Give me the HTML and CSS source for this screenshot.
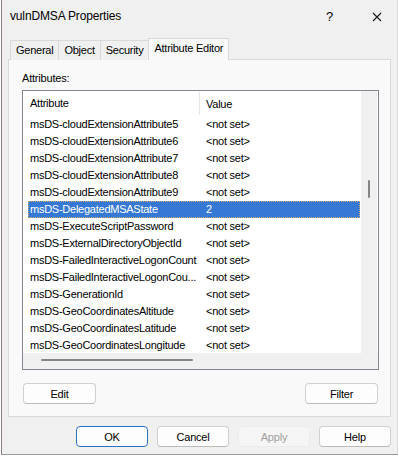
FILE: index.html
```html
<!DOCTYPE html>
<html>
<head>
<meta charset="utf-8">
<link rel="stylesheet" href="styles.css">
</head>
<body>
<div class="window">
  <div class="titlebar">
    <span class="title">vulnDMSA Properties</span>
    <span class="help">?</span>
    <svg class="close" width="10" height="10" viewBox="0 0 10 10"><path d="M1 1 L9 9 M9 1 L1 9" stroke="#1a1a1a" stroke-width="1.1" fill="none"/></svg>
  </div>
  <div class="tabs">
    <div class="tab">General</div>
    <div class="tab">Object</div>
    <div class="tab">Security</div>
    <div class="tab active">Attribute Editor</div>
  </div>
  <div class="panel">
    <div class="label">Attributes:</div>
    <div class="list">
      <div class="list-main">
        <div class="list-content">
          <div class="header">
            <div class="c1">Attribute</div>
            <div class="c2">Value</div>
          </div>
          <div class="row"><div class="c1">msDS-cloudExtensionAttribute5</div><div class="c2">&lt;not set&gt;</div></div>
          <div class="row"><div class="c1">msDS-cloudExtensionAttribute6</div><div class="c2">&lt;not set&gt;</div></div>
          <div class="row"><div class="c1">msDS-cloudExtensionAttribute7</div><div class="c2">&lt;not set&gt;</div></div>
          <div class="row"><div class="c1">msDS-cloudExtensionAttribute8</div><div class="c2">&lt;not set&gt;</div></div>
          <div class="row"><div class="c1">msDS-cloudExtensionAttribute9</div><div class="c2">&lt;not set&gt;</div></div>
          <div class="row selected"><div class="c1">msDS-DelegatedMSAState</div><div class="c2">2</div></div>
          <div class="row"><div class="c1">msDS-ExecuteScriptPassword</div><div class="c2">&lt;not set&gt;</div></div>
          <div class="row"><div class="c1">msDS-ExternalDirectoryObjectId</div><div class="c2">&lt;not set&gt;</div></div>
          <div class="row"><div class="c1">msDS-FailedInteractiveLogonCount</div><div class="c2">&lt;not set&gt;</div></div>
          <div class="row"><div class="c1">msDS-FailedInteractiveLogonCou...</div><div class="c2">&lt;not set&gt;</div></div>
          <div class="row"><div class="c1">msDS-GenerationId</div><div class="c2">&lt;not set&gt;</div></div>
          <div class="row"><div class="c1">msDS-GeoCoordinatesAltitude</div><div class="c2">&lt;not set&gt;</div></div>
          <div class="row"><div class="c1">msDS-GeoCoordinatesLatitude</div><div class="c2">&lt;not set&gt;</div></div>
          <div class="row"><div class="c1">msDS-GeoCoordinatesLongitude</div><div class="c2">&lt;not set&gt;</div></div>
        </div>
        <div class="vscroll"><div class="vthumb"></div></div>
      </div>
      <div class="hscroll"><div class="hthumb"></div></div>
    </div>
    <div class="panel-buttons">
      <button class="btn">Edit</button>
      <button class="btn">Filter</button>
    </div>
  </div>
  <div class="dialog-buttons">
    <button class="btn default">OK</button>
    <button class="btn">Cancel</button>
    <button class="btn disabled">Apply</button>
    <button class="btn">Help</button>
  </div>
</div>
</body>
</html>
```

FILE: styles.css
```css
html, body {
  margin: 0;
  padding: 0;
}
body {
  width: 399px;
  height: 458px;
  overflow: hidden;
  background: #ffffff;
  font-family: "Liberation Sans", Arial, sans-serif;
  color: #000;
}
.window {
  box-sizing: border-box;
  width: 397px;
  height: 455px;
  margin-left: 1px;
  background: #f0f0f0;
  border-left: 1px solid #8c7f86;
  border-bottom: 1px solid #9a9a9a;
  border-right: 1px solid #dcdcdc;
}
.titlebar {
  height: 32px;
  display: flex;
  align-items: center;
  padding-left: 8px;
  font-size: 12px;
}
.title {
  flex: 1;
  letter-spacing: -0.15px;
}
.help {
  font-size: 13px;
  width: 8px;
  margin-right: 38px;
  margin-top: 1px;
}
.close {
  margin-right: 15px;
  margin-top: 1px;
}
.tabs {
  display: flex;
  align-items: flex-end;
  height: 22px;
  margin-top: 6px;
  padding-left: 8px;
  margin-bottom: -1px;
  position: relative;
  z-index: 1;
}
.tab {
  box-sizing: border-box;
  height: 20px;
  border: 1px solid #d9d9d9;
  border-bottom: none;
  margin-left: -1px;
  padding: 0 5px 0 5px;
  font-size: 11px;
  letter-spacing: -0.25px;
  line-height: 19px;
  background: #f0f0f0;
}
.tab:first-child {
  margin-left: 0;
}
.tab.active {
  height: 22px;
  background: #f9f9f9;
  line-height: 19px;
  padding: 0 5px 0 5px;
}
.panel {
  box-sizing: border-box;
  margin-left: 6px;
  width: 383px;
  height: 358px;
  border: 1px solid #d9d9d9;
  background: #f9f9f9;
  padding: 11px 10px 0 13px;
}
.label {
  font-size: 11px;
  line-height: 14px;
  letter-spacing: -0.2px;
}
.list {
  box-sizing: border-box;
  margin-top: 5px;
  width: 357px;
  height: 280px;
  border: 1px solid #828790;
  background: #fff;
  display: flex;
  flex-direction: column;
}
.list-main {
  flex: 1;
  display: flex;
  min-height: 0;
}
.list-content {
  flex: 1;
  overflow: hidden;
  background: #fff;
  font-size: 11px;
  letter-spacing: -0.25px;
}
.vscroll {
  width: 16px;
  margin-right: 1px;
  background: #f0f0f0;
  position: relative;
}
.vthumb {
  position: absolute;
  left: 7px;
  top: 89px;
  width: 2px;
  height: 18px;
  border-radius: 1px;
  background: #858585;
}
.hscroll {
  height: 16px;
  background: #f0f0f0;
  position: relative;
}
.hthumb {
  position: absolute;
  left: 18px;
  top: 6px;
  width: 152px;
  height: 2px;
  border-radius: 1px;
  background: #858585;
}
.header {
  display: flex;
  height: 25px;
  margin-left: 5px;
  align-items: stretch;
}
.header .c1 {
  width: 169px;
  padding-left: 2px;
  line-height: 24px;
}
.header .c2 {
  border-left: 1px solid #e5e5e5;
  padding-left: 6px;
  line-height: 24px;
  margin-top: 1px;
  margin-bottom: 1px;
}
.row {
  box-sizing: border-box;
  display: flex;
  height: 17px;
  width: 332px;
  margin-left: 5px;
  line-height: 17px;
  white-space: nowrap;
}
.row .c1 {
  width: 169px;
  padding-left: 2px;
  flex: none;
}
.row .c2 {
  padding-left: 7px;
}
.row.selected {
  background: #3679d4;
  color: #fff;
  border: 1px dotted #d9a66a;
  line-height: 15px;
}
.row.selected .c1 {
  padding-left: 1px;
}
.row.selected .c2 {
  padding-left: 7px;
}
.panel-buttons {
  display: flex;
  justify-content: space-between;
  margin-top: 13px;
  padding-left: 1px;
  width: 355px;
}
.btn {
  box-sizing: border-box;
  width: 73px;
  height: 21px;
  padding: 0;
  margin: 0;
  font-family: "Liberation Sans", Arial, sans-serif;
  font-size: 11px;
  letter-spacing: -0.2px;
  color: #000;
  background: #fdfdfd;
  border: 1px solid #d0d0d0;
  border-bottom-color: #bcbcbc;
  border-radius: 4px;
}
.dialog-buttons {
  display: flex;
  justify-content: flex-end;
  gap: 9px;
  margin-top: 9px;
  padding-right: 6px;
}
.dialog-buttons .btn {
  width: 72px;
}
.btn.default {
  border: 1px solid #2f6fc6;
}
.btn.disabled {
  background: #f5f5f5;
  border-color: #ececec;
  color: #a0a0a0;
}
```
